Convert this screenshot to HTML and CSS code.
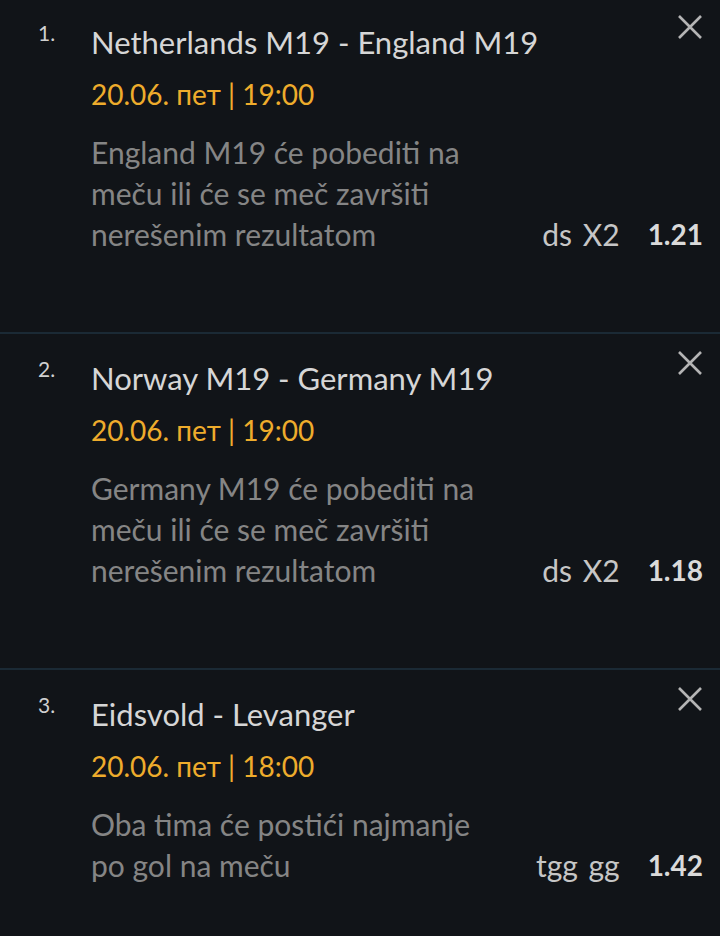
FILE: index.html
```html
<!DOCTYPE html>
<html>
<head>
<meta name="viewport" content="width=device-width, initial-scale=1">
<link rel="stylesheet" href="styles.css">
</head>
<body>

<div class="ticket">

  <div class="pair">
    <span class="num">1.</span>
    <div class="info">
      <div class="match">Netherlands M19 - England M19</div>
      <div class="time">20.06. пет | 19:00</div>
      <div class="bet">
        <span class="desc">England M19 će pobediti na meču ili će se meč završiti nerešenim rezultatom</span>
        <span class="pick">ds X2</span>
        <span class="odd">1.21</span>
      </div>
    </div>
    <svg class="close" width="26" height="26" viewBox="0 0 26 26"><path d="M2 2 L24 24 M24 2 L2 24" stroke="#b4b4b4" stroke-width="2.6" fill="none"/></svg>
  </div>

  <div class="pair">
    <span class="num">2.</span>
    <div class="info">
      <div class="match">Norway M19 - Germany M19</div>
      <div class="time">20.06. пет | 19:00</div>
      <div class="bet">
        <span class="desc">Germany M19 će pobediti na meču ili će se meč završiti nerešenim rezultatom</span>
        <span class="pick">ds X2</span>
        <span class="odd">1.18</span>
      </div>
    </div>
    <svg class="close" width="26" height="26" viewBox="0 0 26 26"><path d="M2 2 L24 24 M24 2 L2 24" stroke="#b4b4b4" stroke-width="2.6" fill="none"/></svg>
  </div>

  <div class="pair">
    <span class="num">3.</span>
    <div class="info">
      <div class="match">Eidsvold - Levanger</div>
      <div class="time">20.06. пет | 18:00</div>
      <div class="bet">
        <span class="desc">Oba tima će postići najmanje po gol na meču</span>
        <span class="pick">tgg gg</span>
        <span class="odd">1.42</span>
      </div>
    </div>
    <svg class="close" width="26" height="26" viewBox="0 0 26 26"><path d="M2 2 L24 24 M24 2 L2 24" stroke="#b4b4b4" stroke-width="2.6" fill="none"/></svg>
  </div>

</div>

</body>
</html>
```
FILE: styles.css
```css
* {
  box-sizing: border-box;
}

body {
  margin: 0;
  background: #111418;
  font-family: Lato, "Noto Sans", sans-serif;
  height: 936px;
  overflow: hidden;
}

/* list is scrolled a couple of pixels */
.ticket {
  margin-top: -2px;
}

.pair {
  display: flex;
  align-items: flex-start;
  padding: 22px 17px 77px 38px;
  border-bottom: 2px solid #1b2a35;
}

.num {
  width: 53px;
  flex-shrink: 0;
  font-size: 21px;
  line-height: 26px;
  color: #d0d0d0;
}

.info {
  flex: 1;
}

.match {
  font-size: 31px;
  line-height: 44px;
  color: #d6d6d6;
}

.time {
  margin-top: 8px;
  font-size: 28px;
  line-height: 44px;
  color: #eeac2c;
}

.bet {
  display: flex;
  align-items: flex-end;
  margin-top: 16px;
  margin-right: -26px;
}

.desc {
  width: 392px;
  font-size: 30px;
  line-height: 41px;
  color: #858585;
}

.pick {
  margin-left: auto;
  font-size: 30px;
  line-height: 41px;
  word-spacing: 3px;
  color: #c6c6c6;
}

.odd {
  margin-left: 28px;
  font-size: 28px;
  line-height: 41px;
  font-weight: bold;
  color: #dadada;
}

.close {
  flex-shrink: 0;
  margin-top: -6px;
}
```
